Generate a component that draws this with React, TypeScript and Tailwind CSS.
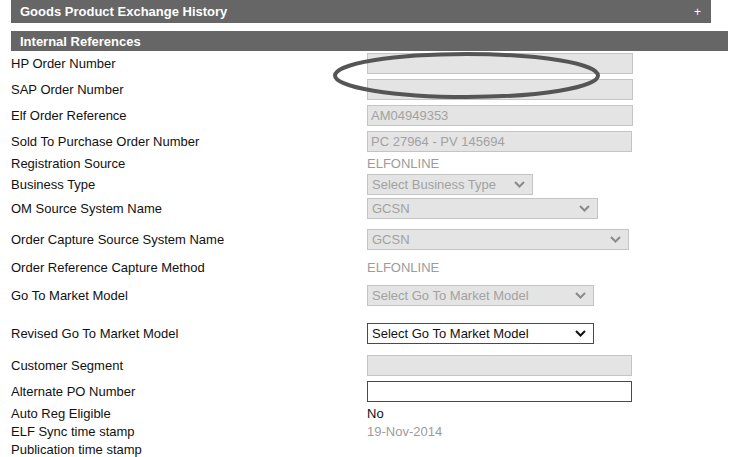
import React from 'react';

type Row = {
  label: string;
  h: string;
  kind: 'input' | 'select' | 'text' | 'none';
  value?: string;
  w?: string;
  enabled?: boolean;
  dark?: boolean;
};

const rows: Row[] = [
  { label: 'HP Order Number', h: 'h-[25px]', kind: 'input', w: 'w-[266px]' },
  { label: 'SAP Order Number', h: 'h-[26px]', kind: 'input', w: 'w-[266px]' },
  { label: 'Elf Order Reference', h: 'h-[26px]', kind: 'input', value: 'AM04949353', w: 'w-[266px]' },
  { label: 'Sold To Purchase Order Number', h: 'h-[26px]', kind: 'input', value: 'PC 27964 - PV 145694', w: 'w-[265px]' },
  { label: 'Registration Source', h: 'h-[19px]', kind: 'text', value: 'ELFONLINE' },
  { label: 'Business Type', h: 'h-[22px]', kind: 'select', value: 'Select Business Type', w: 'w-[166px]' },
  { label: 'OM Source System Name', h: 'h-[27px]', kind: 'select', value: 'GCSN', w: 'w-[231px]' },
  { label: 'Order Capture Source System Name', h: 'h-[34px]', kind: 'select', value: 'GCSN', w: 'w-[262px]' },
  { label: 'Order Reference Capture Method', h: 'h-[22px]', kind: 'text', value: 'ELFONLINE' },
  { label: 'Go To Market Model', h: 'h-[35px]', kind: 'select', value: 'Select Go To Market Model', w: 'w-[227px]' },
  { label: 'Revised Go To Market Model', h: 'h-[40px]', kind: 'select', value: 'Select Go To Market Model', w: 'w-[227px]', enabled: true },
  { label: 'Customer Segment', h: 'h-[25px]', kind: 'input', w: 'w-[265px]' },
  { label: 'Alternate PO Number', h: 'h-[26px]', kind: 'input', w: 'w-[265px]', enabled: true },
  { label: 'Auto Reg Eligible', h: 'h-[18px]', kind: 'text', value: 'No', dark: true },
  { label: 'ELF Sync time stamp', h: 'h-[18px]', kind: 'text', value: '19-Nov-2014' },
  { label: 'Publication time stamp', h: 'h-[18px]', kind: 'none' },
];

const Chevron = ({ dark }: { dark?: boolean }) => (
  <svg width="11" height="7" viewBox="0 0 11 7" className="shrink-0">
    <path d="M1 1 L5.5 5.5 L10 1" fill="none" stroke={dark ? '#111' : '#8a8a8a'} strokeWidth="2" />
  </svg>
);

const Field = ({ row }: { row: Row }) => {
  if (row.kind === 'text') {
    return <span className={row.dark ? 'text-[#111]' : 'text-[#9c9c9c]'}>{row.value}</span>;
  }
  if (row.kind === 'none') return null;
  const box = row.enabled
    ? 'bg-white border-[#4a4a4a] text-[#111]'
    : 'bg-[#e4e4e4] border-[#c4c4c4] text-[#a2a2a2]';
  if (row.kind === 'select') {
    return (
      <div className={`flex items-center justify-between h-[21px] border pl-[4px] pr-[7px] ${row.w} ${box}`}>
        <span>{row.value}</span>
        <Chevron dark={row.enabled} />
      </div>
    );
  }
  return (
    <div className={`flex items-center h-[21px] border px-[3px] ${row.w} ${box}`}>
      {row.value}
    </div>
  );
};

export default function App() {
  return (
    <div className="relative w-[732px] h-[457px] overflow-hidden bg-white text-[13px] leading-none text-[#111] font-['Liberation_Sans',Arial,sans-serif]">
      {/* Section headers */}
      <div className="ml-[11px] mr-[21px] h-[23px] bg-[#666666] flex items-center justify-between pl-[9px] pr-[10px] text-white font-bold">
        <span>Goods Product Exchange History</span>
        <span className="font-normal text-[12px]">+</span>
      </div>
      <div className="mt-[8px] ml-[11px] mr-[4px] h-[20px] bg-[#666666] flex items-center pl-[9px] text-white font-bold">
        Internal References
      </div>

      {/* Form rows */}
      <div className="pl-[11px]">
        {rows.map((row) => (
          <div key={row.label} className={`flex items-center ${row.h}`}>
            <div className="w-[356px] shrink-0">{row.label}</div>
            <Field row={row} />
          </div>
        ))}
      </div>

      {/* Hand-drawn annotation */}
      <svg className="absolute left-0 top-0 pointer-events-none" width="732" height="457">
        <ellipse cx="466.5" cy="75.5" rx="131.5" ry="21.5" fill="none" stroke="#555" strokeWidth="4" />
      </svg>
    </div>
  );
}
